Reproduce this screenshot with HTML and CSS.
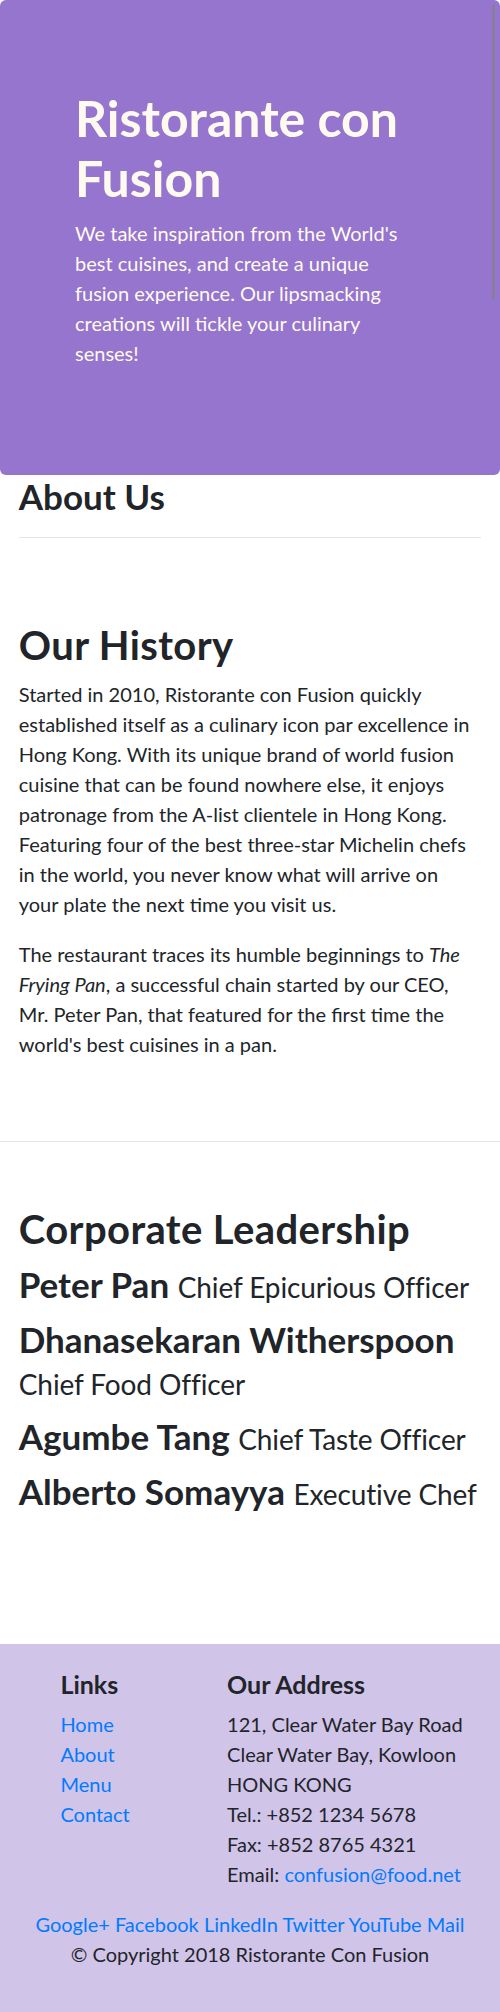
FILE: index.html
```html
<!DOCTYPE html>
<html lang="en">
<head>
<meta charset="utf-8">
<title>Ristorante Con Fusion: About Us</title>
<link rel="stylesheet" href="styles.css">
</head>
<body>
<header class="jumbotron">
  <div class="jumbo-col">
    <h1>Ristorante con Fusion</h1>
    <p>We take inspiration from the World's best cuisines, and create a unique fusion experience. Our lipsmacking creations will tickle your culinary senses!</p>
  </div>
  <div class="scroll-thumb"></div>
</header>

<div class="container">
  <h3 class="page-title">About Us</h3>
  <hr class="rule">
</div>

<section class="row-content bordered">
  <h2>Our History</h2>
  <p>Started in 2010, Ristorante con Fusion quickly established itself as a culinary icon par excellence in Hong Kong. With its unique brand of world fusion cuisine that can be found nowhere else, it enjoys patronage from the A-list clientele in Hong Kong. Featuring four of the best three-star Michelin chefs in the world, you never know what will arrive on your plate the next time you visit us.</p>
  <p>The restaurant traces its humble beginnings to <em>The Frying Pan</em>, a successful chain started by our CEO, Mr. Peter Pan, that featured for the first time the world's best cuisines in a pan.</p>
</section>

<section class="row-content last">
  <h2>Corporate Leadership</h2>
  <h3 class="leader">Peter Pan <small>Chief Epicurious Officer</small></h3>
  <h3 class="leader">Dhanasekaran Witherspoon <small>Chief Food Officer</small></h3>
  <h3 class="leader">Agumbe Tang <small>Chief Taste Officer</small></h3>
  <h3 class="leader">Alberto Somayya <small>Executive Chef</small></h3>
</section>

<footer class="footer">
  <div class="footer-cols">
    <div class="links-col">
      <h5>Links</h5>
      <ul class="plain-list">
        <li><a href="#">Home</a></li>
        <li><a href="#">About</a></li>
        <li><a href="#">Menu</a></li>
        <li><a href="#">Contact</a></li>
      </ul>
    </div>
    <div class="address-col">
      <h5>Our Address</h5>
      <address>
        121, Clear Water Bay Road<br>
        Clear Water Bay, Kowloon<br>
        HONG KONG<br>
        Tel.: +852 1234 5678<br>
        Fax: +852 8765 4321<br>
        Email: <a href="#">confusion@food.net</a>
      </address>
    </div>
  </div>
  <div class="social"><a href="#">Google+</a> <a href="#">Facebook</a> <a href="#">LinkedIn</a> <a href="#">Twitter</a> <a href="#">YouTube</a> <a href="#">Mail</a></div>
  <p class="copyright">© Copyright 2018 Ristorante Con Fusion</p>
</footer>
</body>
</html>
```
FILE: styles.css
```css
* { box-sizing: border-box; }
html, body { margin: 0; padding: 0; }
body {
  font-family: Lato, "Liberation Sans", sans-serif;
  font-size: 20px;
  line-height: 30px;
  color: #212529;
  background: #fff;
}
p { margin: 0 0 20px; }
h1, h2, h3, h5 { margin: 0 0 10px; font-weight: 700; }
h1 { font-size: 50px; line-height: 60px; }
h2 { font-size: 40px; line-height: 48px; letter-spacing: 0.4px; }
h3 { font-size: 35px; line-height: 42px; }
h5 { font-size: 25px; line-height: 30px; }
small { font-size: 28px; font-weight: 400; letter-spacing: -0.1px; }
.leader small { white-space: nowrap; }
a { color: #007bff; text-decoration: none; }

.jumbotron {
  position: relative;
  background: #9575cd;
  color: #fffaf0;
  padding: 87.5px 75px;
  border-radius: 6px;
}
.scroll-thumb {
  position: absolute;
  left: 492px;
  top: 5px;
  width: 3px;
  height: 295px;
  background: #887c9f;
}

.container { padding: 0 18.75px; }
.page-title { margin: 0; }
.rule {
  margin: 20px 0;
  border: 0;
  border-top: 1px solid rgba(0, 0, 0, 0.1);
}

.row-content {
  padding: 62.5px 18.75px;
  min-height: 500px;
}
.row-content.bordered { border-bottom: 1px solid #e6e6e6; }
.row-content.last { min-height: 501.5px; }

.footer {
  background: #d1c4e9;
  padding: 25px 18.75px;
}
.footer-cols { display: flex; margin: 0 -18.75px; }
.links-col { margin-left: 41.67px; width: 166.67px; padding: 0 18.75px; }
.address-col { width: 291.67px; padding: 0 18.75px; }
.plain-list { list-style: none; margin: 0 0 20px; padding: 0; }
address { font-style: normal; margin: 0 0 20px; }
.social { text-align: center; }
.copyright { text-align: center; }
```
